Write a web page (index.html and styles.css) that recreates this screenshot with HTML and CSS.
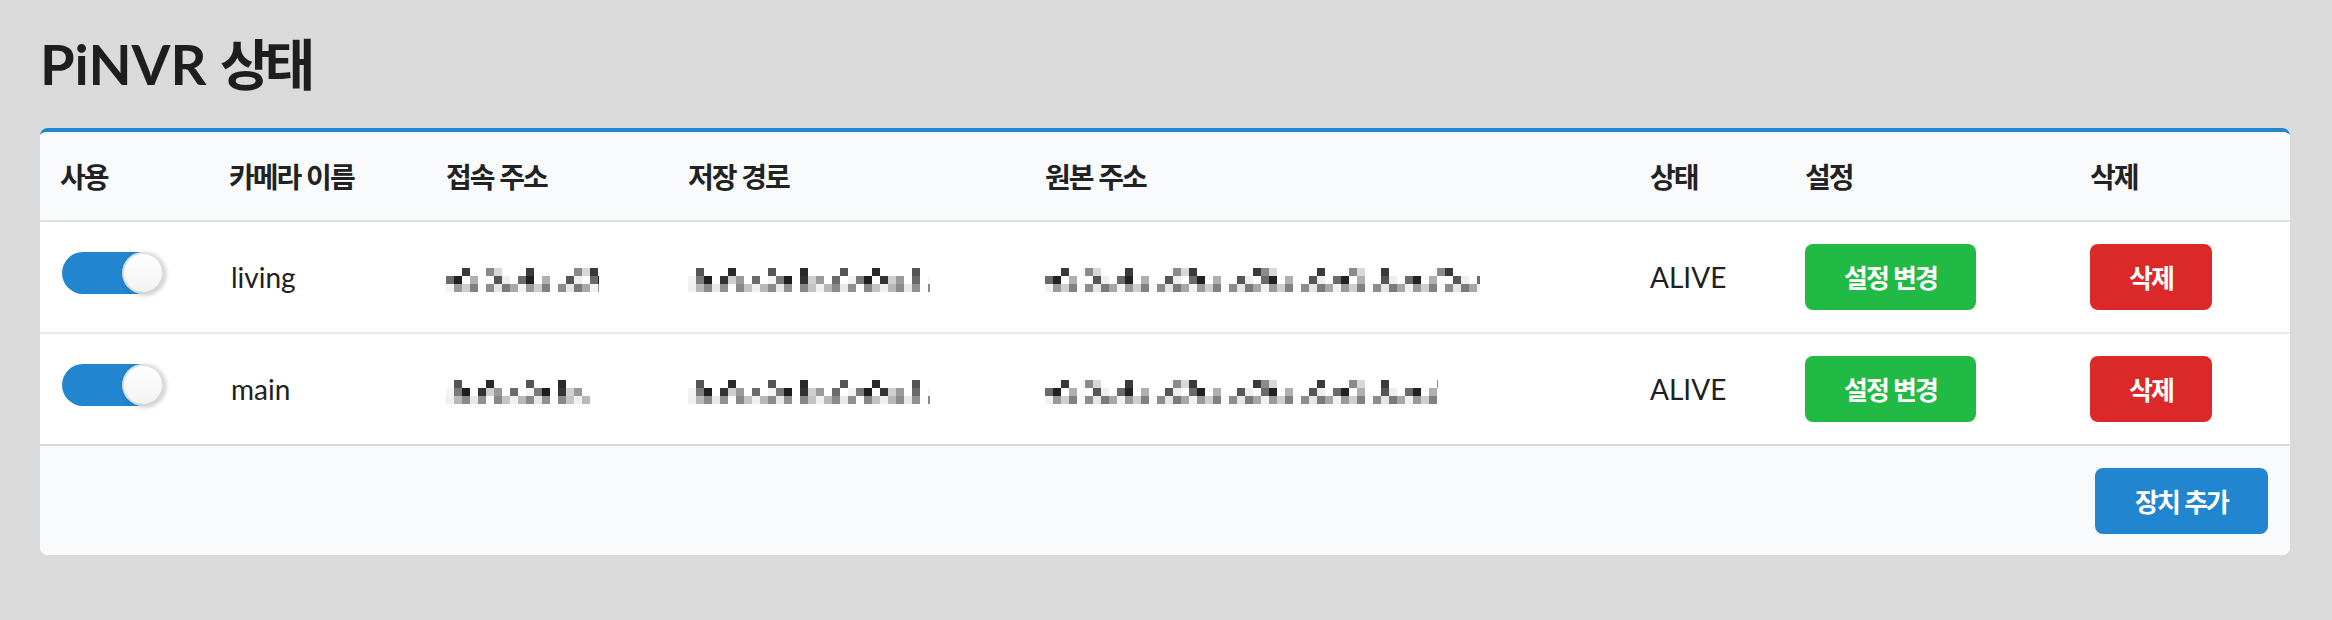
FILE: index.html
```html
<!DOCTYPE html>
<html lang="ko">
<head>
<meta charset="utf-8">
<title>PiNVR 상태</title>
<link rel="stylesheet" href="styles.css">
</head>
<body>
<main class="page">
  <h1 class="title">PiNVR <span class="ko-title">상태</span></h1>
  <div class="card">
    <table class="cams">
      <thead>
        <tr>
          <th class="c-use">사용</th>
          <th class="c-name">카메라 이름</th>
          <th class="c-ip">접속 주소</th>
          <th class="c-path">저장 경로</th>
          <th class="c-src">원본 주소</th>
          <th class="c-state">상태</th>
          <th class="c-set">설정</th>
          <th class="c-del">삭제</th>
        </tr>
      </thead>
      <tbody>
        <tr>
          <td><span class="toggle on"><span class="knob"></span></span></td>
          <td class="name">living</td>
          <td><div class="mosaic m-ip1"></div></td>
          <td><div class="mosaic m-path alt"></div></td>
          <td><div class="mosaic m-src1"></div></td>
          <td>ALIVE</td>
          <td><button class="btn green">설정 변경</button></td>
          <td><button class="btn red">삭제</button></td>
        </tr>
        <tr>
          <td><span class="toggle on"><span class="knob"></span></span></td>
          <td class="name">main</td>
          <td><div class="mosaic m-ip2 alt"></div></td>
          <td><div class="mosaic m-path alt"></div></td>
          <td><div class="mosaic m-src2"></div></td>
          <td>ALIVE</td>
          <td><button class="btn green">설정 변경</button></td>
          <td><button class="btn red">삭제</button></td>
        </tr>
      </tbody>
      <tfoot>
        <tr>
          <th colspan="8"><button class="btn blue">장치 추가</button></th>
        </tr>
      </tfoot>
    </table>
  </div>
</main>
</body>
</html>
```
FILE: styles.css
```css
html, body {
  margin: 0;
  padding: 0;
}
body {
  background: #dadada;
  font-family: Lato, "Noto Sans CJK KR", sans-serif;
  color: #202020;
}
.page {
  padding: 28px 42px 0 40px;
}
.title {
  margin: 0 0 28px;
  font-size: 56px;
  line-height: 72px;
  font-weight: 700;
  color: #1e1e1e;
}
.ko-title {
  font-family: "Noto Sans CJK KR", sans-serif;
  font-size: 55px;
  letter-spacing: -6px;
  line-height: 60px;
}
.card {
  background: #fff;
  border-top: 4px solid #2185d0;
  border-radius: 8px;
  overflow: hidden;
}
.cams {
  width: 100%;
  border-collapse: separate;
  border-spacing: 0;
  table-layout: fixed;
  font-size: 28px;
}
.cams th,
.cams td {
  box-sizing: border-box;
}
.cams thead th {
  background: #f9fafb;
  height: 90px;
  padding: 0 20px;
  text-align: left;
  font-family: "Noto Sans CJK KR", sans-serif;
  font-size: 28px;
  font-weight: 700;
  letter-spacing: -2px;
  color: #222;
  border-bottom: 2px solid #e2e3e4;
}
.c-use { width: 169px; }
.c-name { width: 217px; }
.c-ip { width: 242px; }
.c-path { width: 357px; }
.c-src { width: 605px; }
.c-state { width: 155px; }
.c-set { width: 285px; }
.c-del { width: 220px; }

.cams tbody td {
  padding: 22px 20px;
  height: 110px;
  vertical-align: middle;
  line-height: 40px;
  white-space: nowrap;
}
.cams tbody td.name {
  padding-left: 22px;
}
.cams tbody tr + tr td {
  height: 112px;
  border-top: 2px solid #e8e8e9;
}
.cams tfoot th {
  background: #f9fafb;
  border-top: 2px solid #d9dadb;
  padding: 22px 22px 21px;
  text-align: right;
}

.toggle {
  display: block;
  position: relative;
  width: 98px;
  height: 42px;
  margin: 0 0 8px 2px;
  border-radius: 21px;
  background: #d4d4d5;
}
.toggle.on {
  background: #2185d0;
}
.toggle .knob {
  position: absolute;
  top: 0;
  left: 0;
  width: 42px;
  height: 42px;
  border-radius: 50%;
  background: #fff linear-gradient(rgba(0,0,0,0), rgba(0,0,0,.05));
  box-shadow: 2px 1px 4px rgba(34,36,38,.25), inset 0 0 0 2px rgba(34,36,38,.14);
}
.toggle.on .knob {
  left: 60px;
}

.btn {
  display: inline-block;
  border: 0;
  border-radius: 8px;
  margin: 0;
  padding: 20px 39px;
  font-family: "Noto Sans CJK KR", sans-serif;
  font-size: 26px;
  line-height: 26px;
  font-weight: 700;
  letter-spacing: -2px;
  color: #fff;
  vertical-align: middle;
}
.btn.green { background: #21ba45; }
.btn.red { background: #db2828; }
.btn.blue { background: #2185d0; padding: 20px 40px; }

.mosaic {
  height: 24px;
  margin-top: 6px;
  background:
    repeating-linear-gradient(90deg, transparent 0 16px, #3a3a3a 16px 24px, transparent 24px 64px) 0 0 / 100% 8px no-repeat,
    repeating-linear-gradient(90deg, transparent 0 40px, #8a8a8a 40px 48px, #d8d8d8 48px 56px, transparent 56px 88px) 0 0 / 100% 8px no-repeat,
    repeating-linear-gradient(90deg, #6a6a6a 0 8px, #222 8px 16px, transparent 16px 24px, #b0b0b0 24px 32px, transparent 32px 48px, #555 48px 56px, #eee 56px 64px, transparent 64px 72px) 0 8px / 100% 8px no-repeat,
    repeating-linear-gradient(90deg, #f2f2f2 0 8px, #9a9a9a 8px 16px, #cfcfcf 16px 24px, #808080 24px 32px, #fafafa 32px 40px, #8c8c8c 40px 48px, #e6e6e6 48px 56px, #7a7a7a 56px 64px, #a8a8a8 64px 72px) 0 16px / 100% 8px no-repeat;
}
.mosaic.alt {
  background:
    repeating-linear-gradient(90deg, transparent 0 8px, #555 8px 16px, transparent 16px 40px, #2a2a2a 40px 48px, transparent 48px 72px) 0 0 / 100% 8px no-repeat,
    repeating-linear-gradient(90deg, #f4f4f4 0 8px, #7a7a7a 8px 16px, #1e1e1e 16px 24px, transparent 24px 32px, #333 32px 40px, #cfcfcf 40px 48px, #9a9a9a 48px 56px, transparent 56px 64px, #6a6a6a 64px 72px, transparent 72px 80px) 0 8px / 100% 8px no-repeat,
    repeating-linear-gradient(90deg, #f0f0f0 0 8px, #b8b8b8 8px 16px, #8a8a8a 16px 24px, #e8e8e8 24px 32px, #909090 32px 40px, #fbfbfb 40px 48px, #888 48px 56px, #c4c4c4 56px 64px) 0 16px / 100% 8px no-repeat;
}
.m-ip1 { width: 153px; }
.m-ip2 { width: 144px; }
.m-path { width: 242px; }
.m-src1 { width: 435px; }
.m-src2 { width: 393px; }
```
